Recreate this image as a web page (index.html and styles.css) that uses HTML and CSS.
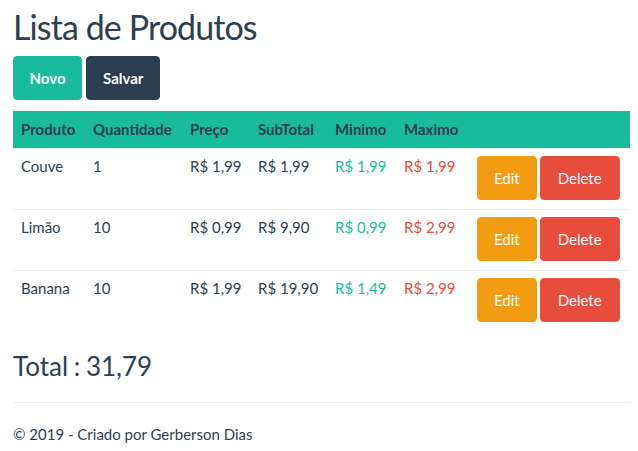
FILE: index.html
```html
<!DOCTYPE html>
<html lang="pt-BR">
<head>
<meta charset="utf-8">
<title>Lista de Produtos</title>
<link rel="stylesheet" href="styles.css">
</head>
<body>
<div class="container">
  <h1 class="title">Lista de Produtos</h1>
  <div class="actions">
    <button class="btn btn-primary btn-novo">Novo</button>
    <button class="btn btn-dark btn-salvar">Salvar</button>
  </div>
  <table class="table">
    <colgroup>
      <col class="c-prod"><col class="c-qtd"><col class="c-preco"><col class="c-sub"><col class="c-min"><col class="c-max"><col class="c-act">
    </colgroup>
    <thead>
      <tr><th>Produto</th><th>Quantidade</th><th>Preço</th><th>SubTotal</th><th>Minimo</th><th>Maximo</th><th></th></tr>
    </thead>
    <tbody>
      <tr>
        <td>Couve</td><td>1</td><td>R$ 1,99</td><td>R$ 1,99</td>
        <td class="text-success">R$ 1,99</td><td class="text-danger">R$ 1,99</td>
        <td class="cell-actions"><button class="btn btn-warning">Edit</button><button class="btn btn-danger">Delete</button></td>
      </tr>
      <tr>
        <td>Limão</td><td>10</td><td>R$ 0,99</td><td>R$ 9,90</td>
        <td class="text-success">R$ 0,99</td><td class="text-danger">R$ 2,99</td>
        <td class="cell-actions"><button class="btn btn-warning">Edit</button><button class="btn btn-danger">Delete</button></td>
      </tr>
      <tr>
        <td>Banana</td><td>10</td><td>R$ 1,99</td><td>R$ 19,90</td>
        <td class="text-success">R$ 1,49</td><td class="text-danger">R$ 2,99</td>
        <td class="cell-actions"><button class="btn btn-warning">Edit</button><button class="btn btn-danger">Delete</button></td>
      </tr>
    </tbody>
  </table>
  <h3 class="total">Total : 31,79</h3>
  <hr class="divider">
  <footer class="footer"><p>© 2019 - Criado por Gerberson Dias</p></footer>
</div>
</body>
</html>
```
FILE: styles.css
```css
* { box-sizing: border-box; }
html, body { margin: 0; padding: 0; }
body {
  font-family: Lato, "Open Sans", "Liberation Sans", sans-serif;
  font-size: 15px;
  line-height: 21px;
  color: #2c3e50;
  background: #fff;
}
.container {
  padding: 0 8px 0 13px;
}
.title {
  font-size: 34px;
  font-weight: 400;
  line-height: 1.1;
  letter-spacing: -0.9px;
  margin: 8px 0 10.6px;
}
.actions {
  display: flex;
  gap: 4px;
}
.btn {
  font-family: inherit;
  font-size: 15px;
  line-height: 22px;
  padding: 10px 15px;
  border: 1px solid transparent;
  border-radius: 4px;
  color: #fff;
  cursor: pointer;
}
.actions .btn { font-weight: 700; }
.actions .btn-novo { padding: 10px 15.5px; }
.actions .btn-salvar { padding: 10px 16px; }
.btn-primary { background: #18bc9c; border-color: #18bc9c; }
.btn-dark { background: #2c3e50; border-color: #2c3e50; }
.btn-warning { background: #f39c12; border-color: #f39c12; }
.btn-danger { background: #e74c3c; border-color: #e74c3c; }
.table {
  width: 100%;
  table-layout: fixed;
  border-collapse: collapse;
  margin: 11px 0 21px;
}
.c-prod { width: 72px; }
.c-qtd { width: 97px; }
.c-preco { width: 68px; }
.c-sub { width: 77px; }
.c-min { width: 69px; }
.c-max { width: 73px; }
.table th {
  background: #18bc9c;
  text-align: left;
  font-weight: 700;
  padding: 8px;
  line-height: 21px;
  white-space: nowrap;
}
.table td {
  padding: 7px 8px 9px;
  vertical-align: top;
  border-top: 1px solid #ecf0f1;
  white-space: nowrap;
}
.table td.cell-actions { padding: 7px 8px 9px; display: flex; gap: 3px; }
.cell-actions .btn { padding: 10px 16px; }
.cell-actions .btn-danger { padding: 10px 17px; }
.text-success { color: #18bc9c; }
.text-danger { color: #e74c3c; }
.total {
  font-size: 26px;
  font-weight: 400;
  line-height: 1.1;
  word-spacing: -1px;
  margin: 0 0 21px;
}
.divider {
  border: 0;
  border-top: 1px solid #ecf0f1;
  margin: 0 0 21px;
}
.footer p { margin: 0; }
```
